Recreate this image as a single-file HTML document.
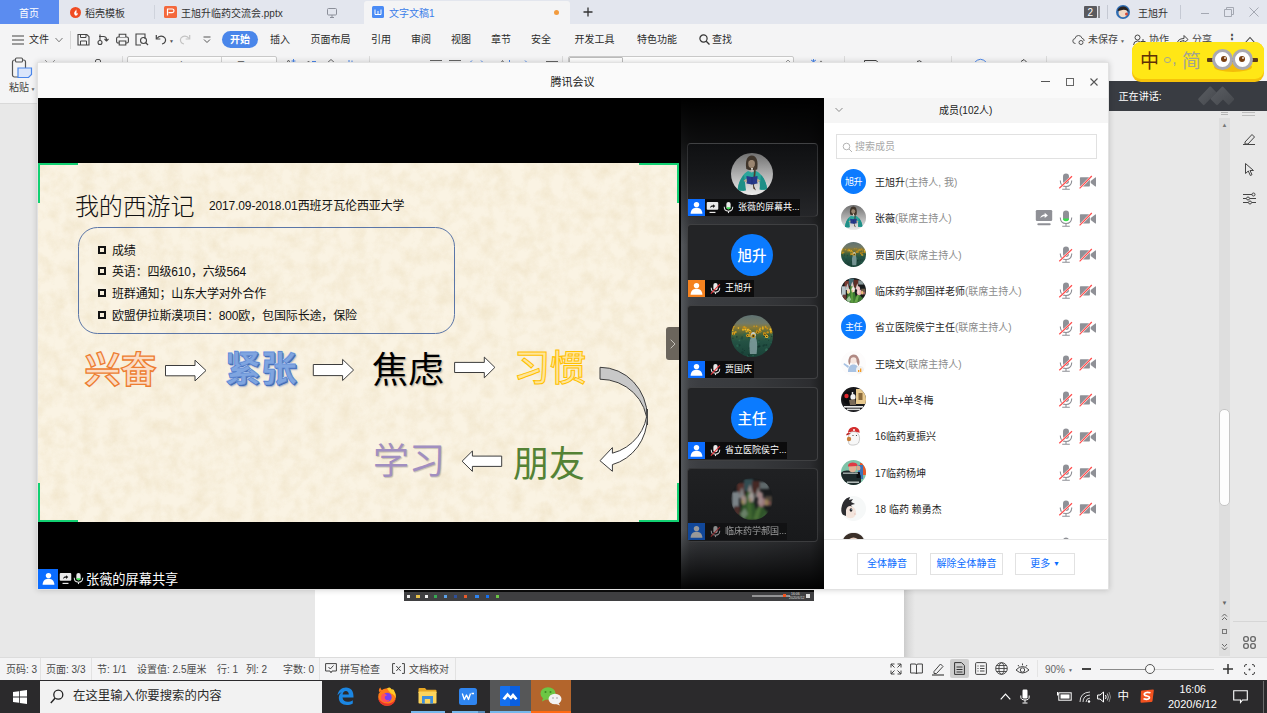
<!DOCTYPE html>
<html lang="zh-CN">
<head>
<meta charset="utf-8">
<title>腾讯会议</title>
<style>
*{box-sizing:border-box;margin:0;padding:0}
html,body{width:1267px;height:713px;overflow:hidden}
body{position:relative;background:#e8e8e8;font-family:"Liberation Sans","Noto Sans CJK SC",sans-serif;font-size:12px;color:#333;line-height:1}
.abs{position:absolute}
.t{position:absolute;white-space:nowrap;line-height:1}
/* ===== WPS chrome ===== */
#tabbar{left:0;top:0;width:1267px;height:24px;background:#e3e6ee}
#menubar{left:0;top:24px;width:1267px;height:30px;background:#f4f4f5}
#ribbon{left:0;top:54px;width:1267px;height:50px;background:#f4f4f5;border-bottom:1px solid #d9d9d9}
#docarea{left:0;top:104px;width:1267px;height:553px;background:#e8e8e8}
#page{left:315px;top:104px;width:589px;height:553px;background:#fff;}
#statusbar{left:0;top:657px;width:1267px;height:23px;background:#f4f4f5;border-top:1px solid #dcdcdc}
#taskbar{left:0;top:680px;width:1267px;height:33px;background:#2b2a2c}
/* ===== meeting window ===== */
#win{left:37px;top:62px;width:1072px;height:528px;background:#fafafa;border:1px solid #e2e2e2;box-shadow:0 0 6px rgba(0,0,0,.18)}
#stage{left:38px;top:98px;width:786px;height:491px;background:#000}
#slide{left:38px;top:163px;width:641px;height:359px;background:#f3ebda}
#strip{left:681px;top:98px;width:143px;height:491px;background:linear-gradient(180deg,#000 0%,rgba(0,0,0,.78) 9%,rgba(0,0,0,.4) 19%,rgba(0,0,0,0) 30%,rgba(0,0,0,0) 88%,rgba(0,0,0,.55) 95%,rgba(0,0,0,.95) 100%),linear-gradient(90deg,#54575b 0%,#4a4d51 3%,#404246 6%,#3b3d41 14%,#37393c 50%,#2c2d30 90%,#1c1d1e 100%)}
#members{left:824px;top:98px;width:284px;height:491px;background:#fff}

/* ===== slide ===== */
#slide{overflow:hidden}
#slide .t{color:#111;letter-spacing:-.140px}
.corner{position:absolute;background:#12d072}
.bul{position:absolute;left:60px;width:8px;height:8px;border:2px solid #111}
.wa{position:absolute;white-space:nowrap;line-height:1;font-size:36px;font-family:"Noto Sans CJK SC",sans-serif}

/* ===== strip ===== */
.tile{position:absolute;left:6px;width:131px;height:74px;background:#232426;border:1px solid rgba(255,255,255,.13);border-radius:4px}
.tile .av{position:absolute;left:43px;top:9px;width:42px;height:42px;border-radius:50%;overflow:hidden}
.tile .lab{position:absolute;left:0;top:54.500px;height:17px;background:#0c0c0d;color:#fff;font-size:9px;white-space:nowrap;padding-left:17px;line-height:17px;font-family:"Liberation Sans","Noto Sans CJK SC",sans-serif}
.tile .lab .u{position:absolute;left:0;top:0;width:17px;height:17px;background:#0a62ee}
.tile .lab svg{position:absolute}
.bluec{background:#0b7bff;color:#fff;text-align:center;font-family:"Noto Sans CJK SC",sans-serif}
/* ===== members ===== */
#members .hd{position:absolute;left:0;top:0;width:284px;height:25px;background:#f5f5f5}
#members .search{position:absolute;left:12px;top:36px;width:261px;height:25px;border:1px solid #e1e1e1;background:#fff}
.row{position:absolute;left:0;width:283px;height:36px}
.row .av{position:absolute;left:17px;top:5.500px;width:25px;height:25px;border-radius:50%;overflow:hidden}
.row .nm{position:absolute;left:51px;top:14.500px;font-size:10px;line-height:1;color:#1f1f1f;white-space:nowrap}
.row .nm i{font-style:normal;color:#8c8c8c}
.row svg.ic{position:absolute;top:9px}
.btn{position:absolute;top:455px;height:22px;border:1px solid #e2e2e2;background:#fff;color:#0a6cff;font-size:10px;line-height:20px;text-align:center;white-space:nowrap}

/* ===== chrome text ===== */
.m{position:absolute;white-space:nowrap;line-height:1;font-size:10px;color:#2b2b2b;top:35px}
.sb{position:absolute;white-space:nowrap;line-height:1;font-size:10px;color:#4a4a4a;top:665px}
.sep{position:absolute;width:1px;background:#d9d9d9}
.ico{position:absolute;overflow:visible}
</style>
</head>
<body>
<svg width="0" height="0" style="position:absolute">
<defs>
<linearGradient id="gGirl" x1="0" y1="0" x2="0" y2="1"><stop offset="0" stop-color="#707070"/><stop offset=".55" stop-color="#b5b5b5"/><stop offset="1" stop-color="#ececec"/></linearGradient>
<linearGradient id="gSun" x1="0" y1="0" x2="0" y2="1"><stop offset="0" stop-color="#5f7272"/><stop offset=".2" stop-color="#717a68"/><stop offset=".3" stop-color="#8a7a34"/><stop offset=".48" stop-color="#3f5f3c"/><stop offset=".62" stop-color="#245244"/><stop offset="1" stop-color="#1a4238"/></linearGradient>
<filter id="blur1" x="-5%" y="-5%" width="110%" height="110%"><feGaussianBlur stdDeviation="0.9"/></filter>
<radialGradient id="gTul" cx=".5" cy=".5" r=".6"><stop offset="0" stop-color="#3a4a30"/><stop offset="1" stop-color="#15181a"/></radialGradient>
<symbol id="avGirl" viewBox="0 0 42 42">
<rect width="42" height="42" fill="url(#gGirl)"/>
<path d="M15.300 16C14 8 16 2.500 20.800 2.500C25.600 2.500 27.400 8 26.200 16.500L23 17L18 17Z" fill="#3f352b"/>
<path d="M6.500 37.500C7.500 28 12 20.500 17 18L20.500 19.500L25 18C31 20.500 35.500 29 36.200 36.500L29.500 37L28.500 29L14 29L13.500 38Z" fill="#2ba59b"/>
<path d="M6.500 37.500C7.500 30 10 25 13 22L15 37.500Z" fill="#1e8f87"/><path d="M36.200 36.500C35.500 30 33 25 30 22L28.500 36.500Z" fill="#1e8f87"/>
<ellipse cx="20.600" cy="10.500" rx="3.300" ry="4.600" fill="#9b8671"/>
<path d="M17.300 9C17.800 6 19 5 20.600 5C22.300 5 23.500 6 24 9C23 7.500 22 7 20.600 7C19.200 7 18.200 7.500 17.300 9Z" fill="#3f352b"/>
<path d="M20 15L21 19.500L22 15Z" fill="#e8e2da"/>
<path d="M24.500 13C25.300 20 23.500 27 23 33L25 37.500L22.300 35.500C21.500 28 23.300 19 23.300 13Z" fill="#4b3c2f"/>
<path d="M15.500 23L21 24L26.500 23L26.500 30.500L21 31.500L15.500 30.500Z" fill="#26398a"/>
<path d="M21 24V31.500" stroke="#1b2a6a" stroke-width=".6"/>
<path d="M12.500 28L15.500 25.500L16 29.500Z" fill="#c9a98c"/><path d="M29.500 28L26.500 25.500L26 29.500Z" fill="#c9a98c"/>
</symbol>
<symbol id="avSun" viewBox="0 0 42 42">
<rect width="42" height="42" fill="url(#gSun)"/>
<circle cx="8.4" cy="30.3" r="1.08" fill="#163a32" opacity=".8"/><circle cx="33.2" cy="29.9" r="0.65" fill="#12302a" opacity=".8"/><circle cx="40.2" cy="29.3" r="1.25" fill="#1d4a3e" opacity=".8"/><circle cx="40.1" cy="27.4" r="0.68" fill="#2b6550" opacity=".8"/><circle cx="19.7" cy="26.8" r="0.89" fill="#12302a" opacity=".8"/><circle cx="35.3" cy="30.0" r="1.02" fill="#163a32" opacity=".8"/><circle cx="35.1" cy="21.8" r="0.81" fill="#2b6550" opacity=".8"/><circle cx="20.1" cy="23.1" r="1.13" fill="#1d4a3e" opacity=".8"/><circle cx="3.6" cy="40.8" r="1.08" fill="#35705a" opacity=".8"/><circle cx="16.9" cy="40.8" r="1.08" fill="#2b6550" opacity=".8"/><circle cx="41.7" cy="19.6" r="0.97" fill="#35705a" opacity=".8"/><circle cx="33.9" cy="22.4" r="1.16" fill="#35705a" opacity=".8"/><circle cx="27.6" cy="27.1" r="0.94" fill="#2b6550" opacity=".8"/><circle cx="0.9" cy="37.4" r="1.08" fill="#163a32" opacity=".8"/><circle cx="22.1" cy="40.5" r="0.85" fill="#2b6550" opacity=".8"/><circle cx="34.7" cy="23.9" r="0.70" fill="#1d4a3e" opacity=".8"/><circle cx="21.0" cy="36.6" r="0.76" fill="#12302a" opacity=".8"/><circle cx="17.6" cy="22.0" r="1.23" fill="#1d4a3e" opacity=".8"/><circle cx="37.7" cy="34.2" r="1.15" fill="#12302a" opacity=".8"/><circle cx="17.7" cy="40.1" r="0.90" fill="#12302a" opacity=".8"/><circle cx="6.4" cy="30.7" r="1.20" fill="#2b6550" opacity=".8"/><circle cx="25.6" cy="36.8" r="0.62" fill="#2b6550" opacity=".8"/><circle cx="19.9" cy="35.7" r="0.95" fill="#1d4a3e" opacity=".8"/><circle cx="28.7" cy="31.2" r="0.89" fill="#163a32" opacity=".8"/><circle cx="37.1" cy="20.3" r="0.65" fill="#163a32" opacity=".8"/><circle cx="32.4" cy="30.7" r="0.95" fill="#163a32" opacity=".8"/><circle cx="18.6" cy="33.1" r="0.90" fill="#12302a" opacity=".8"/><circle cx="8.4" cy="25.4" r="0.91" fill="#35705a" opacity=".8"/><circle cx="21.3" cy="24.7" r="0.92" fill="#1d4a3e" opacity=".8"/><circle cx="38.8" cy="39.5" r="0.66" fill="#35705a" opacity=".8"/><circle cx="5.8" cy="21.8" r="0.85" fill="#163a32" opacity=".8"/><circle cx="28.2" cy="28.9" r="0.67" fill="#1d4a3e" opacity=".8"/><circle cx="32.9" cy="39.6" r="0.62" fill="#1d4a3e" opacity=".8"/><circle cx="6.0" cy="39.3" r="1.27" fill="#2b6550" opacity=".8"/><circle cx="31.4" cy="21.2" r="1.21" fill="#2b6550" opacity=".8"/><circle cx="41.6" cy="38.1" r="0.63" fill="#35705a" opacity=".8"/><circle cx="41.8" cy="28.3" r="0.84" fill="#1d4a3e" opacity=".8"/><circle cx="13.4" cy="35.6" r="0.52" fill="#12302a" opacity=".8"/><circle cx="19.3" cy="35.2" r="0.81" fill="#12302a" opacity=".8"/><circle cx="26.2" cy="30.8" r="0.55" fill="#2b6550" opacity=".8"/><circle cx="40.8" cy="21.4" r="0.71" fill="#163a32" opacity=".8"/><circle cx="38.0" cy="23.2" r="1.10" fill="#35705a" opacity=".8"/><circle cx="35.7" cy="34.5" r="1.26" fill="#35705a" opacity=".8"/><circle cx="6.3" cy="40.1" r="0.96" fill="#1d4a3e" opacity=".8"/><circle cx="3.8" cy="20.3" r="1.05" fill="#35705a" opacity=".8"/><circle cx="37.6" cy="25.2" r="0.51" fill="#163a32" opacity=".8"/><circle cx="33.7" cy="20.9" r="1.18" fill="#163a32" opacity=".8"/><circle cx="11.1" cy="21.8" r="0.51" fill="#12302a" opacity=".8"/><circle cx="17.5" cy="40.1" r="1.00" fill="#163a32" opacity=".8"/><circle cx="22.1" cy="24.5" r="0.59" fill="#2b6550" opacity=".8"/><circle cx="11.0" cy="23.2" r="1.25" fill="#1d4a3e" opacity=".8"/><circle cx="22.3" cy="23.7" r="0.86" fill="#2b6550" opacity=".8"/><circle cx="11.4" cy="37.5" r="1.30" fill="#163a32" opacity=".8"/><circle cx="0.6" cy="35.9" r="0.94" fill="#2b6550" opacity=".8"/><circle cx="21.6" cy="24.7" r="0.86" fill="#35705a" opacity=".8"/><circle cx="27.6" cy="31.6" r="1.21" fill="#12302a" opacity=".8"/><circle cx="12.9" cy="23.9" r="0.68" fill="#2b6550" opacity=".8"/><circle cx="35.0" cy="35.3" r="1.01" fill="#35705a" opacity=".8"/><circle cx="41.6" cy="41.6" r="1.17" fill="#163a32" opacity=".8"/><circle cx="3.0" cy="36.0" r="0.70" fill="#2b6550" opacity=".8"/><circle cx="2.3" cy="34.3" r="0.80" fill="#12302a" opacity=".8"/><circle cx="28.2" cy="25.5" r="0.69" fill="#1d4a3e" opacity=".8"/><circle cx="1.9" cy="23.3" r="0.72" fill="#163a32" opacity=".8"/><circle cx="11.1" cy="41.1" r="1.28" fill="#12302a" opacity=".8"/><circle cx="13.6" cy="19.8" r="1.21" fill="#2b6550" opacity=".8"/><circle cx="15.0" cy="19.0" r="0.81" fill="#35705a" opacity=".8"/><circle cx="11.7" cy="34.1" r="0.70" fill="#163a32" opacity=".8"/><circle cx="3.8" cy="37.8" r="0.62" fill="#12302a" opacity=".8"/><circle cx="1.8" cy="19.5" r="0.74" fill="#2b6550" opacity=".8"/><circle cx="3.5" cy="41.0" r="1.18" fill="#2b6550" opacity=".8"/>
<circle cx="13.6" cy="12.2" r="0.91" fill="#e0a91e"/><circle cx="34.5" cy="11.5" r="0.83" fill="#d39a1a"/><circle cx="1.6" cy="15.3" r="0.96" fill="#e0a91e"/><circle cx="23.1" cy="11.2" r="0.79" fill="#d39a1a"/><circle cx="26.5" cy="16.9" r="1.11" fill="#edb92a"/><circle cx="2.1" cy="12.9" r="0.94" fill="#d39a1a"/><circle cx="12.2" cy="12.1" r="0.69" fill="#c98f17"/><circle cx="23.5" cy="18.0" r="1.22" fill="#d39a1a"/><circle cx="23.5" cy="18.0" r="0.51" fill="#3d2d10"/><circle cx="15.6" cy="16.5" r="1.07" fill="#e0a91e"/><circle cx="26.0" cy="16.0" r="1.21" fill="#c98f17"/><circle cx="26.0" cy="16.0" r="0.51" fill="#3d2d10"/><circle cx="19.6" cy="20.7" r="1.57" fill="#d39a1a"/><circle cx="19.6" cy="20.7" r="0.66" fill="#3d2d10"/><circle cx="33.4" cy="18.2" r="1.30" fill="#c98f17"/><circle cx="33.4" cy="18.2" r="0.54" fill="#3d2d10"/><circle cx="22.1" cy="20.1" r="1.67" fill="#c98f17"/><circle cx="22.1" cy="20.1" r="0.70" fill="#3d2d10"/><circle cx="25.6" cy="11.3" r="0.78" fill="#d39a1a"/><circle cx="31.8" cy="12.2" r="0.85" fill="#e0a91e"/><circle cx="40.4" cy="11.4" r="0.80" fill="#c98f17"/><circle cx="14.3" cy="14.4" r="1.05" fill="#edb92a"/><circle cx="2.9" cy="11.5" r="0.70" fill="#e0a91e"/><circle cx="2.5" cy="18.2" r="1.46" fill="#edb92a"/><circle cx="2.5" cy="18.2" r="0.61" fill="#3d2d10"/><circle cx="12.0" cy="14.7" r="1.15" fill="#e0a91e"/><circle cx="39.5" cy="14.4" r="1.10" fill="#edb92a"/><circle cx="2.5" cy="19.0" r="1.32" fill="#d39a1a"/><circle cx="2.5" cy="19.0" r="0.55" fill="#3d2d10"/><circle cx="16.7" cy="20.6" r="1.62" fill="#d39a1a"/><circle cx="16.7" cy="20.6" r="0.68" fill="#3d2d10"/><circle cx="18.9" cy="16.5" r="1.40" fill="#edb92a"/><circle cx="18.9" cy="16.5" r="0.59" fill="#3d2d10"/><circle cx="36.3" cy="13.6" r="0.94" fill="#c98f17"/><circle cx="28.7" cy="14.7" r="0.97" fill="#e0a91e"/><circle cx="7.4" cy="13.1" r="0.83" fill="#edb92a"/><circle cx="34.9" cy="12.5" r="0.80" fill="#d39a1a"/><circle cx="17.6" cy="14.6" r="1.10" fill="#d39a1a"/><circle cx="29.0" cy="16.2" r="1.26" fill="#e0a91e"/><circle cx="29.0" cy="16.2" r="0.53" fill="#3d2d10"/><circle cx="19.2" cy="20.1" r="1.75" fill="#edb92a"/><circle cx="19.2" cy="20.1" r="0.74" fill="#3d2d10"/><circle cx="16.7" cy="14.8" r="1.09" fill="#edb92a"/><circle cx="2.6" cy="11.2" r="0.65" fill="#d39a1a"/><circle cx="4.6" cy="17.1" r="1.14" fill="#d39a1a"/><circle cx="22.5" cy="20.9" r="1.69" fill="#e0a91e"/><circle cx="22.5" cy="20.9" r="0.71" fill="#3d2d10"/><circle cx="36.7" cy="17.3" r="1.17" fill="#c98f17"/><circle cx="40.1" cy="17.1" r="1.29" fill="#e0a91e"/><circle cx="40.1" cy="17.1" r="0.54" fill="#3d2d10"/><circle cx="35.7" cy="21.4" r="1.68" fill="#edb92a"/><circle cx="35.7" cy="21.4" r="0.71" fill="#3d2d10"/><circle cx="13.1" cy="12.1" r="0.94" fill="#c98f17"/><circle cx="20.1" cy="18.1" r="1.40" fill="#d39a1a"/><circle cx="20.1" cy="18.1" r="0.59" fill="#3d2d10"/><circle cx="39.9" cy="16.3" r="1.09" fill="#e0a91e"/><circle cx="31.8" cy="13.8" r="1.06" fill="#e0a91e"/><circle cx="29.2" cy="13.4" r="0.91" fill="#d39a1a"/><circle cx="14.9" cy="13.0" r="0.94" fill="#c98f17"/><circle cx="26.7" cy="17.2" r="1.43" fill="#d39a1a"/><circle cx="26.7" cy="17.2" r="0.60" fill="#3d2d10"/><circle cx="33.9" cy="19.5" r="1.61" fill="#d39a1a"/><circle cx="33.9" cy="19.5" r="0.68" fill="#3d2d10"/>
<path d="M19 39C18 31 18.300 26 19.600 23.500C19 20.500 20.500 18 22.300 18C24.100 18 25.600 20.500 25 23.500C26.300 26 26.600 31 25.600 39Z" fill="#8aa5a8" opacity=".8"/>
<path d="M19.600 21C19.600 18.500 20.800 17 22.300 17C23.800 17 25 18.500 25 21Z" fill="#c9d3d3" opacity=".9"/>
<circle cx="22.300" cy="21" r="2.100" fill="#c2931c"/><circle cx="22.300" cy="21" r="1" fill="#3a2c12"/>
</symbol>
<symbol id="avTul" viewBox="0 0 42 42">
<rect width="42" height="42" fill="#171a1c"/>
<g filter="url(#blur1)">
<rect x="6" y="5" width="8" height="13" fill="#7a3a32"/><rect x="13" y="1" width="9" height="12" fill="#3f6a72"/><rect x="21" y="3" width="8" height="13" fill="#5e2f28"/><rect x="29" y="4" width="9" height="7" fill="#8a9a9c"/>
<path d="M15 18L19 6L23 18Z" fill="#d8c8c4"/><path d="M24 19L27.500 9L30 19Z" fill="#cfc9c2"/><path d="M7 20L11 9L14 20Z" fill="#bfc4c4"/>
<rect x="1" y="14" width="7" height="16" fill="#b9c6cc"/><rect x="3" y="28" width="6" height="9" fill="#6a3a34"/>
<rect x="34" y="18" width="7" height="10" fill="#6a5a48"/><circle cx="38" cy="25" r="2" fill="#b86a6a"/>
<path d="M8 42L12 22L17 12L19 30L22 20L25 32L30 26L36 34L32 42Z" fill="#3d7a30"/>
<path d="M16 42L17 14L19.500 14L21 42Z" fill="#5a9a3e"/><path d="M22 42L27 28L30 30L27 42Z" fill="#69a848"/>
<path d="M9 36L14 30L17 36L13 41Z" fill="#9fc49a"/><path d="M30 40L37 32L35 40Z" fill="#4f8a44"/>
<ellipse cx="12.500" cy="22" rx="2.800" ry="4.300" fill="#f1cfc4"/><ellipse cx="11.500" cy="24" rx="1.500" ry="2.500" fill="#e6d27a"/>
<ellipse cx="20.500" cy="19.500" rx="3" ry="4.500" fill="#f6ece4"/><ellipse cx="19.500" cy="22" rx="1.300" ry="2.300" fill="#f0c9a0"/>
<ellipse cx="29" cy="17.500" rx="3" ry="3.800" fill="#f3c6c6"/>
<ellipse cx="30.500" cy="24" rx="4" ry="5" fill="#eeb3b6"/><ellipse cx="29.500" cy="23" rx="1.800" ry="3.500" fill="#f7d6d6"/>
<ellipse cx="35.500" cy="24.500" rx="1.800" ry="3.200" fill="#e9c07a"/>
</g>
</symbol>
<symbol id="avWxw" viewBox="0 0 25 25">
<rect width="25" height="25" fill="#fdfcfc"/>
<path d="M8 7C9 3 15 2 17 6C19 9 19 13 17.500 15L15 10L10 10L8.500 14C7 12 7 9 8 7Z" fill="#b08a84"/>
<ellipse cx="12.500" cy="9.500" rx="3" ry="3.300" fill="#f6e6df"/>
<path d="M7 21C7 16 9 13.500 12.500 13.500C16 13.500 18 16 18 21Z" fill="#a9c3e3"/>
<path d="M8 15L3 12L2.500 13.500L7 17Z" fill="#a9c3e3"/>
<circle cx="19" cy="19" r="4" fill="#f1f1f1"/><rect x="17" y="19" width="1.300" height="2" fill="#f59a23"/><rect x="19" y="17.500" width="1.300" height="3.500" fill="#f59a23"/>
</symbol>
<symbol id="avSd" viewBox="0 0 25 25">
<rect width="25" height="25" fill="#17171a"/>
<rect x="15" y="2" width="10" height="15" fill="#e8c98e"/><rect x="17.500" y="6" width="4" height="7" fill="#8a6a3c"/>
<circle cx="8" cy="11" r="6.500" fill="#0c0c0e"/><circle cx="5.500" cy="9" r="2.200" fill="#e0262d"/>
<ellipse cx="12" cy="10" rx="2.600" ry="3" fill="#f2f2f2"/><circle cx="11.500" cy="6" r=".9" fill="#fff"/>
<path d="M8 13L14 12L15 18L9 18Z" fill="#7a6a58"/>
<rect x="3" y="19" width="19" height="1.700" fill="#e6e6e6"/><rect x="6" y="21.600" width="13" height="1.500" fill="#d8d8d8"/>
</symbol>
<symbol id="avDuck" viewBox="0 0 25 25">
<rect width="25" height="25" fill="#fff"/>
<path d="M8 21C6.500 17 7 12 9 10C11 8 15 8 17 10.500C19 13 19 17 17.500 20C16 22 10 23 8 21Z" fill="#f7f7f7" stroke="#9a9a9a" stroke-width=".5"/>
<path d="M7 10C7 6 10 4 13 4C16.500 4 19 6.500 18.500 10C15 8 10 8 7 10Z" fill="#d32f2f"/>
<path d="M7 10C5.500 10.500 5 11.500 5.500 12.500L10 10.500Z" fill="#b71c1c"/>
<circle cx="13" cy="7" r="1" fill="#fff"/>
<circle cx="8" cy="16" r="2.200" fill="#c9803a"/>
<circle cx="12" cy="12.500" r=".6" fill="#333"/><circle cx="15.500" cy="12.500" r=".6" fill="#333"/>
</symbol>
<symbol id="avMan" viewBox="0 0 25 25">
<rect width="25" height="25" fill="#7fc2a8"/>
<rect x="19" y="3" width="6" height="12" fill="#e9582a"/>
<rect x="17" y="5" width="5" height="14" fill="#3d73b8"/>
<path d="M0 25L0 13C3 10 7 10 12 12C16 12 19 13 20 16L20 25Z" fill="#1e2a2b"/>
<ellipse cx="11.500" cy="8" rx="3.700" ry="4.200" fill="#e3b295"/>
<path d="M7 5.500C7.500 2 15 1.500 16.500 5L16.500 6L7 6.500Z" fill="#e03a44"/>
<ellipse cx="17.500" cy="8" rx="2" ry="2.500" fill="#d8a98e"/>
<rect x="15.500" y="12" width="3.500" height="6" rx=".8" fill="#0d0d0f"/>
<rect x="2" y="12.600" width="15" height="1.200" fill="#dfe6e4" opacity=".8"/><rect x="6" y="21.500" width="12" height="1.400" fill="#dfe6e4" opacity=".85"/>
</symbol>
<symbol id="avAni" viewBox="0 0 25 25">
<rect width="25" height="25" fill="#f6f8f8"/>
<path d="M0 18C0 8 3 2 9 1L8 4L12 3L10 6L14 8L10 9L12 12L8 11L9 15L5 14L5 20Z" fill="#2c2c30"/>
<path d="M5 14C6 10 9 9 12 11C15 13 16 17 14 20C12 23 7 23 5 20Z" fill="#f3e4dc"/>
<ellipse cx="10" cy="14" rx="1.400" ry="1.800" fill="#2a2a2e"/><circle cx="10.300" cy="13.600" r=".5" fill="#8fb9d9"/>
<path d="M13 17L15.500 18L13.500 19Z" fill="#e8c9c0"/>
</symbol>
<symbol id="avLast" viewBox="0 0 25 25">
<rect width="25" height="25" fill="#efefef"/>
<path d="M1 14C1 5 6 1 12.500 1C19 1 24 5 24 14L20 9L5 9Z" fill="#3a2f28"/>
<ellipse cx="12.500" cy="13" rx="7" ry="7.500" fill="#e9d0c0"/>
</symbol>
<!-- list icons -->
<symbol id="icMicOff" viewBox="0 0 16 18">
<rect x="5" y="1.500" width="6" height="10.500" rx="3" fill="#8f9096"/>
<path d="M2.300 8.500C2.300 12.500 4.500 14.500 8 14.500C11.500 14.500 13.700 12.500 13.700 8.500" fill="none" stroke="#8f9096" stroke-width="1.100"/>
<path d="M8 14.500V17M4.200 17.200H11.800" stroke="#8f9096" stroke-width="1.100" fill="none"/>
<path d="M1.300 16.300L14 4.200" stroke="#fff" stroke-width="2.200"/><path d="M1.300 16.300L14 4.200" stroke="#ff4b4b" stroke-width="1.200"/>
</symbol>
<symbol id="icMicOn" viewBox="0 0 16 18">
<rect x="5" y="1.500" width="6" height="10.500" rx="3" fill="#8f9096"/>
<path d="M5 9.500H11V9.800A3 2.400 0 0 1 5 9.800Z" fill="#35e04a"/>
<path d="M2.300 8.500C2.300 12.500 4.500 14.500 8 14.500C11.500 14.500 13.700 12.500 13.700 8.500" fill="none" stroke="#8f9096" stroke-width="1.100"/>
<path d="M8 14.500V17M4.200 17.200H11.800" stroke="#8f9096" stroke-width="1.100" fill="none"/>
</symbol>
<symbol id="icCamOff" viewBox="0 0 20 18">
<rect x="1.900" y="5.300" width="10" height="9.300" rx=".8" fill="#8f9096"/>
<path d="M12.700 9L17.300 5.500Q18 5 18 5.900V14Q18 14.900 17.300 14.400L12.700 11Z" fill="#8f9096"/>
<path d="M1.600 16.400L13.800 4" stroke="#fff" stroke-width="2.200"/><path d="M1.600 16.400L13.800 4" stroke="#ff4b4b" stroke-width="1.200"/>
</symbol>
<symbol id="icShare" viewBox="0 0 18 18">
<rect x=".8" y="1" width="16.400" height="11" rx="1.300" fill="#8f9096"/>
<path d="M3.300 15.300H14.700" stroke="#8f9096" stroke-width="2" stroke-linecap="round"/>
<path d="M5.300 9.300C5.800 6.500 7.500 5.400 9.700 5.400V3.700L12.900 6.400L9.700 9.100V7.300C8 7.300 6.600 7.800 5.300 9.300Z" fill="#fff"/>
</symbol>
<!-- strip label icons -->
<symbol id="icUser" viewBox="0 0 17 17">
<circle cx="8.500" cy="5.600" r="2.700" fill="#fff"/><path d="M2.600 14.800C2.800 10.800 5 8.800 8.500 8.800C12 8.800 14.200 10.800 14.400 14.800Z" fill="#fff"/>
</symbol>
<symbol id="icMicW" viewBox="0 0 14 14">
<rect x="4.700" y="1" width="4.600" height="8" rx="2.300" fill="#e9e9e9"/>
<path d="M2.400 6.300C2.400 9.500 4.200 11 7 11C9.800 11 11.600 9.500 11.600 6.300" fill="none" stroke="#e9e9e9" stroke-width="1.100"/>
<path d="M7 11V13" stroke="#e9e9e9" stroke-width="1.200"/>
<path d="M2 12.500L11.800 2.300" stroke="#e8343a" stroke-width="1.100"/>
</symbol>
<symbol id="icMicG" viewBox="0 0 14 14">
<rect x="4.700" y="1" width="4.600" height="8" rx="2.300" fill="#e9e9e9"/>
<path d="M4.700 6.800H9.300A2.300 2.300 0 0 1 4.700 6.800Z" fill="#39d94c"/>
<path d="M2.400 6.300C2.400 9.500 4.200 11 7 11C9.800 11 11.600 9.500 11.600 6.300" fill="none" stroke="#e9e9e9" stroke-width="1.100"/>
<path d="M7 11V13" stroke="#e9e9e9" stroke-width="1.200"/>
</symbol>
<symbol id="icShareW" viewBox="0 0 14 14">
<rect x=".8" y="1.200" width="12.400" height="8.200" rx="1" fill="#e9e9e9"/>
<path d="M3.800 12.300H10.200" stroke="#e9e9e9" stroke-width="1.300"/>
<path d="M4.300 7.600C4.700 5.500 6 4.700 7.600 4.700V3.400L10 5.500L7.600 7.500V6.200C6.300 6.200 5.300 6.500 4.300 7.600Z" fill="#1a1a1a"/>
</symbol>
</defs>
</svg>
<!-- WPS background app -->
<div id="tabbar" class="abs"></div>
<div id="menubar" class="abs"></div>
<div id="ribbon" class="abs"></div>
<div id="docarea" class="abs"></div>
<div id="page" class="abs"></div>
<div class="abs" style="left:904px;top:104px;width:11px;height:553px;background:linear-gradient(90deg,#cbcbcb,#dadada 40%,#e8e8e8)"></div>
<div id="statusbar" class="abs"></div>
<div id="taskbar" class="abs"></div>

<!-- tab bar content -->
<div class="abs" style="left:0;top:0;width:59px;height:24px;background:#5b8cf0"></div>
<div class="t" style="left:19px;top:8.500px;font-size:10px;color:#fff">首页</div>
<svg class="ico" style="left:70px;top:7px" width="11" height="11" viewBox="0 0 11 11"><circle cx="5.500" cy="5.500" r="5.500" fill="#f04b22"/><path d="M5.800 1.800C6.800 3.500 4 4.500 4.200 6.600C4.300 8 5.300 8.800 6.300 8.600C7.600 8.300 8 7 7.500 5.800C7.200 6.500 6.700 6.700 6.300 6.500C6.800 4.800 6.600 3 5.800 1.800Z" fill="#fff"/></svg>
<div class="t" style="left:85px;top:8.500px;font-size:10px;color:#333">稻壳模板</div>
<div class="sep" style="left:154px;top:5px;height:14px;background:#cfd3dc"></div>
<svg class="ico" style="left:164px;top:6px" width="13" height="12" viewBox="0 0 13 12"><rect width="13" height="12" rx="1.500" fill="#f4683c"/><path d="M3.500 9.500V3H8.200Q10 3 10 4.800Q10 6.600 8.200 6.600H4.500" fill="none" stroke="#fff" stroke-width="1.200"/></svg>
<div class="t" style="left:181px;top:8.500px;font-size:10px;color:#333">王旭升临药交流会.pptx</div>
<svg class="ico" style="left:327px;top:8px" width="10" height="10" viewBox="0 0 10 10"><rect x=".5" y=".5" width="9" height="6.500" rx="1" fill="none" stroke="#8b8f99" stroke-width="1"/><path d="M5 7V9M3 9.500H7" stroke="#8b8f99" stroke-width="1"/></svg>
<div class="abs" style="left:364px;top:1px;width:206px;height:23px;background:#f4f4f5;border-radius:3px 3px 0 0"></div>
<svg class="ico" style="left:372px;top:6px" width="12" height="12" viewBox="0 0 12 12"><rect width="12" height="12" rx="1.500" fill="#4a8bf5"/><path d="M3 3.500V8.500H9V3.500M6 5V8.500" fill="none" stroke="#fff" stroke-width="1"/></svg>
<div class="t" style="left:389px;top:8.500px;font-size:10px;color:#3b7de9">文字文稿1</div>
<div class="abs" style="left:554px;top:10px;width:5px;height:5px;border-radius:50%;background:#f29b3e"></div>
<svg class="ico" style="left:583px;top:7px" width="10" height="10" viewBox="0 0 10 10"><path d="M5 .5V9.500M.5 5H9.500" stroke="#333" stroke-width="1.300"/></svg>
<div class="abs" style="left:1084px;top:6px;width:13px;height:12px;background:#5a5a5e;border-radius:1px"></div>
<div class="t" style="left:1087.500px;top:7.500px;font-size:10px;color:#fff">2</div>
<div class="abs" style="left:1098px;top:6px;width:2px;height:12px;background:#8a8a8e"></div>
<div class="sep" style="left:1107px;top:5px;height:14px;background:#c5c9d3"></div>
<svg class="ico" style="left:1116px;top:5px" width="14" height="14" viewBox="0 0 14 14"><circle cx="7" cy="7" r="7" fill="#2f6db3"/><ellipse cx="7" cy="8" rx="4.500" ry="4.200" fill="#f3d9c4"/><path d="M1.500 6C2 2.500 5 1 8 1.500C11 2 12.800 4.500 12.500 7C11 5 8 4 4.500 5.500Z" fill="#2a2320"/><circle cx="10.500" cy="9" r="1.500" fill="#d74a3a"/></svg>
<div class="t" style="left:1138px;top:8.500px;font-size:10px;color:#333">王旭升</div>
<div class="sep" style="left:1180px;top:5px;height:14px;background:#c5c9d3"></div>
<div class="abs" style="left:1201px;top:13px;width:8px;height:1px;background:#a4a8b2"></div>
<svg class="ico" style="left:1224px;top:7px" width="10" height="10" viewBox="0 0 10 10"><path d="M.5 2.500H7.500V9.500H.5Z M2.500 2.500V.5H9.500V7.500H7.500" fill="none" stroke="#a4a8b2" stroke-width="1"/></svg>
<svg class="ico" style="left:1249px;top:7px" width="10" height="10" viewBox="0 0 10 10"><path d="M.5 .5L9.500 9.500M9.500 .5L.5 9.500" stroke="#a4a8b2" stroke-width="1"/></svg>
<!-- menu bar content -->
<svg class="ico" style="left:12px;top:35px" width="12" height="10" viewBox="0 0 12 10"><path d="M0 1H12M0 5H12M0 9H12" stroke="#444" stroke-width="1.100"/></svg>
<div class="m" style="left:29px">文件</div>
<svg class="ico" style="left:55px;top:37px" width="8" height="6" viewBox="0 0 8 6"><path d="M.5 1L4 4.800L7.500 1" fill="none" stroke="#777" stroke-width="1"/></svg>
<div class="sep" style="left:70px;top:31px;height:18px"></div>
<svg class="ico" style="left:77px;top:33px" width="13" height="13" viewBox="0 0 13 13"><path d="M1 1.500H9.800L12 3.700V12H1Z" fill="none" stroke="#444" stroke-width="1.100"/><path d="M3.500 1.500V4.500H9V1.500M3.500 12V8H9.500V12" fill="none" stroke="#444" stroke-width="1"/></svg>
<svg class="ico" style="left:97px;top:33px" width="13" height="13" viewBox="0 0 13 13"><path d="M2 3.500H6.500Q9.500 3.500 9.500 6.500V8M9.500 8L7.500 6M9.500 8L11.500 6" fill="none" stroke="#444" stroke-width="1.100"/><circle cx="3" cy="9.500" r="2" fill="none" stroke="#444" stroke-width="1.100"/><path d="M3 1.500V7.500" stroke="#444" stroke-width="1.100"/></svg>
<svg class="ico" style="left:116px;top:33px" width="13" height="13" viewBox="0 0 13 13"><rect x=".6" y="4" width="11.800" height="6" rx="1.500" fill="none" stroke="#444" stroke-width="1.100"/><path d="M3.200 4V1.300H9.800V4M3.200 8H9.800V12H3.200Z" fill="#f4f4f5" stroke="#444" stroke-width="1.100"/></svg>
<svg class="ico" style="left:135px;top:33px" width="14" height="13" viewBox="0 0 14 13"><path d="M10 6V1H1V12H6" fill="none" stroke="#444" stroke-width="1.100"/><circle cx="8.500" cy="7.500" r="3" fill="none" stroke="#444" stroke-width="1.100"/><path d="M10.700 9.700L13 12" stroke="#444" stroke-width="1.200"/></svg>
<svg class="ico" style="left:155px;top:34px" width="12" height="11" viewBox="0 0 12 11"><path d="M2 4.500C4 1.500 8 1.500 10 4C11.500 6.500 10 9.500 7 10" fill="none" stroke="#444" stroke-width="1.200"/><path d="M1.300 1V5H5.300" fill="none" stroke="#444" stroke-width="1.200"/></svg>
<div class="t" style="left:169px;top:39px;font-size:5px;color:#555">▼</div>
<svg class="ico" style="left:179px;top:34px" width="12" height="11" viewBox="0 0 12 11"><path d="M10 4.500C8 1.500 4 1.500 2 4C.5 6.500 2 9.500 5 10" fill="none" stroke="#c3c3c3" stroke-width="1.200"/><path d="M10.700 1V5H6.700" fill="none" stroke="#c3c3c3" stroke-width="1.200"/></svg>
<svg class="ico" style="left:203px;top:36px" width="8" height="8" viewBox="0 0 8 8"><path d="M.5 1H7.500M1 3.500L4 6.500L7 3.500" fill="none" stroke="#555" stroke-width="1"/></svg>
<div class="abs" style="left:222px;top:31px;width:36px;height:17px;border-radius:9px;background:#4a86ea"></div>
<div class="m" style="left:230px;color:#fff;font-weight:700">开始</div>
<div class="m" style="left:270px">插入</div>
<div class="m" style="left:310.500px">页面布局</div>
<div class="m" style="left:371px">引用</div>
<div class="m" style="left:411px">审阅</div>
<div class="m" style="left:451px">视图</div>
<div class="m" style="left:491px">章节</div>
<div class="m" style="left:531px">安全</div>
<div class="m" style="left:574.500px">开发工具</div>
<div class="m" style="left:637px">特色功能</div>
<svg class="ico" style="left:699px;top:34px" width="11" height="11" viewBox="0 0 11 11"><circle cx="4.500" cy="4.500" r="3.600" fill="none" stroke="#333" stroke-width="1.200"/><path d="M7.200 7.200L10.500 10.500" stroke="#333" stroke-width="1.300"/></svg>
<div class="m" style="left:712px">查找</div>
<svg class="ico" style="left:1072px;top:34px" width="13" height="11" viewBox="0 0 13 11"><path d="M3.500 9.500Q.8 9.500 .8 7Q.8 4.800 3 4.600Q3.500 1.500 6.500 1.500Q9.300 1.500 10 4.300Q12.200 4.600 12.200 7" fill="none" stroke="#555" stroke-width="1"/><circle cx="9" cy="8.500" r="2" fill="none" stroke="#555" stroke-width="1"/></svg>
<div class="m" style="left:1088px;color:#444">未保存</div>
<div class="t" style="left:1120px;top:39px;font-size:5px;color:#666">▼</div>
<svg class="ico" style="left:1133px;top:34px" width="13" height="12" viewBox="0 0 13 12"><circle cx="4.500" cy="3.500" r="2.500" fill="none" stroke="#444" stroke-width="1"/><path d="M.6 11Q.6 7 4.500 7Q7 7 8 9" fill="none" stroke="#444" stroke-width="1"/><path d="M10 5V10M7.500 7.500H12.500" stroke="#444" stroke-width="1"/></svg>
<div class="m" style="left:1149px;color:#444">协作</div>
<svg class="ico" style="left:1176px;top:34px" width="13" height="12" viewBox="0 0 13 12"><path d="M1 11Q1 4.500 8 4.500V1.500L12 5.500L8 9V6.500Q3.500 6.500 1 11Z" fill="none" stroke="#444" stroke-width="1"/></svg>
<div class="m" style="left:1192px;color:#444">分享</div>
<div class="t" style="left:1226px;top:33px;font-size:12px;color:#444;font-weight:700">⋮</div>
<svg class="ico" style="left:1244px;top:36px" width="12" height="8" viewBox="0 0 12 8"><path d="M1 7L6 1.500L11 7" fill="none" stroke="#444" stroke-width="1.100"/></svg>
<!-- ribbon fragments -->
<svg class="ico" style="left:10px;top:57px" width="24" height="24" viewBox="0 0 24 24"><rect x="2.500" y="3" width="13" height="17" rx="2" fill="#f4f4f5" stroke="#555" stroke-width="1.200"/><rect x="5.500" y="1" width="7" height="4" rx="1" fill="#f4f4f5" stroke="#555" stroke-width="1.100"/><path d="M8 11H21.500V17.500L18.500 20.500H8Z" fill="#dbe6fb" stroke="#4a86ea" stroke-width="1.200"/></svg>
<div class="t" style="left:9px;top:82.500px;font-size:10px;color:#444">粘贴</div>
<div class="t" style="left:30.500px;top:86.500px;font-size:5px;color:#666">▼</div>
<div class="abs" style="left:127px;top:56px;width:150px;height:14px;background:#fff;border:1px solid #c9c9c9;border-radius:2px"></div>
<div class="sep" style="left:221px;top:57px;height:12px;background:#d4d4d4"></div>
<div class="t" style="left:132px;top:61.500px;font-size:10px;color:#555">Calibri (正文)</div>
<div class="t" style="left:226px;top:61.500px;font-size:10px;color:#555">五号</div>
<div class="abs" style="left:568px;top:56px;width:226px;height:14px;background:#fff;border:1px solid #c9c9c9;border-radius:2px"></div>
<div class="abs" style="left:569px;top:57px;width:54px;height:13px;border:1px solid #bdbdbd;border-radius:1px"></div>
<div class="t" style="left:626px;top:60.500px;font-size:13px;color:#222;font-weight:700;letter-spacing:1.500px">AaBbCcDd</div>
<svg class="ico" style="left:0;top:54px;overflow:hidden" width="1267" height="9" viewBox="0 54 1267 9">
<g stroke="#dcdcdc" stroke-width="1"><path d="M122.500 56V63M369.500 56V63M562.500 56V63M844.500 56V63M951.500 56V63M1046.500 56V63"/></g>
<g fill="none" stroke="#9a9a9a" stroke-width="1">
<path d="M45 60L50 65M55 60L50 65"/><path d="M60 62.500H61.500M64 62.500H65.500M68 62.500H69.500"/>
<rect x="95.500" y="59.500" width="5" height="6" rx="1.500" stroke="#555"/>
</g>
<g fill="none" stroke="#666" stroke-width="1">
<path d="M285 66L288.500 60L292 66"/><path d="M305 66L308.500 61L312 66"/><path d="M326 64L331 59.500L336 64"/>
<path d="M377 62.500H378.500M381 62.500H389M402 62.500H403.500M406 62.500H414"/>
<path d="M430 60.500H442M449 60.500H461"/>
<path d="M499 66L502.500 60.500L506 66"/>
<rect x="546.500" y="61.500" width="11" height="6"/>
<path d="M864.500 66V60.500H876L879.500 63.500V66" stroke="#444"/>
<path d="M917 61.500Q920 59.500 922 62.500" stroke="#444"/>
<path d="M1021 61.500L1024 59.500L1027 62.500" stroke="#444"/>
</g>
<g fill="none" stroke="#4a86ea" stroke-width="1">
<path d="M293.500 59V63M291.500 61H295.500"/><path d="M312 61.500H316"/>
<path d="M345 62.500H355M349 60V63M352 60.500V63"/>
<path d="M470 62.500H483M472 60.500L470 62.500M481 60.500L483 62.500"/>
<path d="M509.500 60V63"/><path d="M520 62.500H527M525 60.500L527 62.500M529 62.500H533"/>
<path d="M813.500 59V63M811 60L816 63M816 60L811 63"/>
<path d="M974 63Q980.500 55.500 987 63"/>
</g>
<path d="M819 63L821 60.500L823 63Z" fill="#666"/>
<path d="M786 62L788 60L790 62" fill="none" stroke="#999" stroke-width="1"/>
</svg>
<!-- right side of WPS -->
<div class="abs" style="left:1219px;top:118px;width:11px;height:538px;background:#dedede"></div>
<div class="abs" style="left:1221px;top:112px;width:7px;height:1px;background:#b5b5b5"></div><div class="abs" style="left:1221px;top:114px;width:7px;height:1px;background:#b5b5b5"></div>
<div class="abs" style="left:1219px;top:409px;width:11px;height:97px;background:#fdfdfd;border:1px solid #c6c6c6;border-radius:5px"></div>
<div class="t" style="left:1221.500px;top:122px;font-size:6px;color:#777">▲</div>
<div class="t" style="left:1221.500px;top:600px;font-size:6px;color:#666">▼</div>
<svg class="ico" style="left:1221px;top:613px" width="7" height="8" viewBox="0 0 7 8"><path d="M1 3.500L3.500 1L6 3.500M1 7L3.500 4.500L6 7" fill="none" stroke="#666" stroke-width="1"/></svg>
<div class="abs" style="left:1222px;top:629px;width:5px;height:5px;border:1px solid #777"></div>
<svg class="ico" style="left:1221px;top:643px" width="7" height="8" viewBox="0 0 7 8"><path d="M1 1L3.500 3.500L6 1M1 4.500L3.500 7L6 4.500" fill="none" stroke="#666" stroke-width="1"/></svg>
<div class="abs" style="left:1242px;top:112px;width:13px;height:1px;background:#bdbdbd"></div>
<div class="abs" style="left:1242px;top:115px;width:13px;height:1px;background:#bdbdbd"></div>
<svg class="ico" style="left:1242px;top:132px" width="14" height="14" viewBox="0 0 14 14"><path d="M3 10L10 2.500L12.500 5L6 12H3Z" fill="none" stroke="#444" stroke-width="1"/><path d="M1 12.500H13" stroke="#444" stroke-width="1"/></svg>
<svg class="ico" style="left:1244px;top:162px" width="11" height="15" viewBox="0 0 11 15"><path d="M1.500 1.500V11.500L4.300 9L6.300 13.500L8 12.700L6 8.500H9.500Z" fill="none" stroke="#444" stroke-width="1"/></svg>
<svg class="ico" style="left:1243px;top:192px" width="13" height="13" viewBox="0 0 13 13"><path d="M0 2.500H9M0 6.500H3M7 6.500H13M0 10.500H5M9 10.500H13" stroke="#444" stroke-width="1"/><circle cx="10.500" cy="2.500" r="1.500" fill="none" stroke="#444" stroke-width="1"/><circle cx="5" cy="6.500" r="1.500" fill="none" stroke="#444" stroke-width="1"/><circle cx="7" cy="10.500" r="1.500" fill="none" stroke="#444" stroke-width="1"/></svg>
<div class="abs" style="left:1233px;top:621px;width:34px;height:1px;background:#d6d6d6"></div>
<svg class="ico" style="left:1243px;top:636px" width="13" height="13" viewBox="0 0 13 13"><g fill="none" stroke="#444" stroke-width="1.100"><rect x=".8" y=".8" width="4.400" height="4.400" rx="1.200"/><rect x="7.800" y=".8" width="4.400" height="4.400" rx="1.200"/><rect x=".8" y="7.800" width="4.400" height="4.400" rx="1.200"/><rect x="7.800" y="7.800" width="4.400" height="4.400" rx="1.200"/></g></svg>
<!-- speaking bar -->
<div class="abs" style="left:1109px;top:81px;width:158px;height:30px;background:#393c42"></div>
<div class="t" style="left:1118.500px;top:92px;font-size:10.100px;color:#fff">正在讲话:</div>
<svg class="ico" style="left:1196px;top:84px" width="40" height="24" viewBox="1196 84 40 24"><defs><linearGradient id="gM" x1="0" y1="0" x2="1" y2="1"><stop offset="0" stop-color="#5b5e63"/><stop offset="1" stop-color="#45484d"/></linearGradient></defs><path d="M1209.500 86.800Q1210.300 86 1211 86.800L1216.500 92.500L1204.500 104.800Q1203.700 105.600 1203 104.800L1198.500 100Q1197.700 99.200 1198.500 98.400Z" fill="url(#gM)"/><path d="M1221.800 87Q1222.600 86.200 1223.400 87L1233.800 98.300Q1234.500 99.100 1233.800 99.900L1229.500 104.600Q1228.700 105.400 1228 104.600L1223 99.500L1217.800 104.800Q1217 105.600 1216.200 104.800L1211 99.500Q1210.300 98.700 1211 98Z" fill="url(#gM)"/></svg>
<!-- IME -->
<div class="abs" style="left:1132px;top:42px;width:132px;height:40px;border-radius:9px;background:#f6c20a"></div>
<div class="abs" style="left:1132px;top:42px;width:132px;height:37px;border-radius:9px;background:#ffe716"></div>
<div class="t" style="left:1140px;top:50px;font-size:19px;color:#5e3006;font-family:'Noto Sans CJK SC',sans-serif;font-weight:400">中</div>
<div class="abs" style="left:1164px;top:56.500px;width:6.500px;height:6.500px;border-radius:50%;border:1.300px solid #a5a68e"></div>
<div class="t" style="left:1172px;top:50px;font-size:17px;color:#a5a68e;font-family:'Liberation Sans',sans-serif">,</div>
<div class="t" style="left:1182px;top:50px;font-size:19px;color:#a2a391;font-family:'Noto Sans CJK SC',sans-serif">简</div>
<div class="abs" style="left:1207px;top:57.500px;width:51px;height:4px;background:#5b3a16;border-radius:1px"></div>
<div class="abs" style="left:1214px;top:62px;width:38px;height:10px;border-radius:50%;background:#f3bd0a"></div>
<div class="abs" style="left:1212px;top:49px;width:21px;height:21px;border-radius:50%;background:#fff;border:3px solid #aaa9b1"></div>
<div class="abs" style="left:1231.500px;top:49px;width:21px;height:21px;border-radius:50%;background:#fff;border:3px solid #aaa9b1"></div>
<div class="abs" style="left:1220.500px;top:55.500px;width:6px;height:6px;border-radius:50%;background:#7a3f12"></div>
<div class="abs" style="left:1239px;top:55.500px;width:6px;height:6px;border-radius:50%;background:#7a3f12"></div>
<div class="abs" style="left:1223.500px;top:56.500px;width:2px;height:2px;border-radius:50%;background:#f2e6da"></div>
<div class="abs" style="left:1242px;top:56.500px;width:2px;height:2px;border-radius:50%;background:#f2e6da"></div>
<!-- status bar -->
<div class="sb" style="left:6px">页码: 3</div>
<div class="sb" style="left:46px">页面: 3/3</div>
<div class="sb" style="left:97px">节: 1/1</div>
<div class="sb" style="left:137px">设置值: 2.5厘米</div>
<div class="sb" style="left:217px">行: 1</div>
<div class="sb" style="left:246px">列: 2</div>
<div class="sb" style="left:283px">字数: 0</div>
<div class="sep" style="left:40px;top:658px;height:22px;background:#e2e2e2"></div>
<div class="sep" style="left:91px;top:658px;height:22px;background:#e2e2e2"></div>
<div class="sep" style="left:319px;top:658px;height:22px;background:#e2e2e2"></div>
<div class="sep" style="left:455px;top:658px;height:22px;background:#e2e2e2"></div>
<svg class="ico" style="left:325px;top:663px" width="12" height="11" viewBox="0 0 12 11"><path d="M.6 .6H11.400V8H7L6 9.800L5 8H.6Z" fill="none" stroke="#444" stroke-width="1"/><path d="M3.500 4L5.300 6L8.500 2.500" fill="none" stroke="#444" stroke-width="1"/></svg>
<div class="sb" style="left:340px">拼写检查</div>
<svg class="ico" style="left:392px;top:663px" width="13" height="11" viewBox="0 0 13 11"><path d="M3 .6H.6V10.400H3M10 .6H12.400V10.400H10" fill="none" stroke="#444" stroke-width="1"/><path d="M4.300 3L8.700 8M8.700 3L4.300 8" stroke="#444" stroke-width="1"/></svg>
<div class="sb" style="left:409px">文档校对</div>
<svg class="ico" style="left:890px;top:663px" width="12" height="12" viewBox="0 0 12 12"><path d="M1 4.500V1H4.500M7.500 1H11V4.500M11 7.500V11H7.500M4.500 11H1V7.500M1 1L4.500 4.500M11 1L7.500 4.500M11 11L7.500 7.500M1 11L4.500 7.500" fill="none" stroke="#444" stroke-width="1"/></svg>
<svg class="ico" style="left:910px;top:663px" width="13" height="12" viewBox="0 0 13 12"><path d="M.6 1H5Q6.500 1 6.500 2.500V11Q6.500 10 5 10H.6ZM12.400 1H8Q6.500 1 6.500 2.500V11Q6.500 10 8 10H12.400Z" fill="none" stroke="#444" stroke-width="1"/></svg>
<svg class="ico" style="left:931px;top:662px" width="14" height="14" viewBox="0 0 14 14"><path d="M3 9.500L9.500 2L12 4.500L5.500 11.500H3Z" fill="none" stroke="#444" stroke-width="1"/><path d="M1 13H13" stroke="#444" stroke-width="1.200"/></svg>
<div class="abs" style="left:950px;top:659px;width:19px;height:19px;background:#cfcfcf;border-radius:2px"></div>
<svg class="ico" style="left:954px;top:662px" width="11" height="13" viewBox="0 0 11 13"><path d="M.6 .6H7.500L10.400 3.500V12.400H.6Z" fill="none" stroke="#333" stroke-width="1"/><path d="M2.500 5H8.500M2.500 7.500H8.500M2.500 10H8.500" stroke="#333" stroke-width="1"/></svg>
<svg class="ico" style="left:975px;top:662px" width="12" height="13" viewBox="0 0 12 13"><rect x=".6" y=".6" width="10.800" height="11.800" rx="1" fill="none" stroke="#444" stroke-width="1"/><path d="M2.500 4H3.500M5 4H9.500M2.500 6.500H3.500M5 6.500H9.500M2.500 9H3.500M5 9H9.500" stroke="#444" stroke-width="1"/></svg>
<svg class="ico" style="left:995px;top:662px" width="13" height="13" viewBox="0 0 13 13"><circle cx="6.500" cy="6.500" r="5.800" fill="none" stroke="#444" stroke-width="1"/><ellipse cx="6.500" cy="6.500" rx="2.600" ry="5.800" fill="none" stroke="#444" stroke-width="1"/><path d="M.8 6.500H12.200M1.500 3.500H11.500M1.500 9.500H11.500" stroke="#444" stroke-width=".9"/></svg>
<svg class="ico" style="left:1015px;top:661px" width="15" height="14" viewBox="0 0 15 14"><path d="M1 9Q7.500 2 14 9Q7.500 15 1 9Z" fill="none" stroke="#444" stroke-width="1"/><circle cx="7.500" cy="9" r="2.200" fill="none" stroke="#444" stroke-width="1"/><path d="M3 4L4 5.500M7.500 2.500V4.300M12 4L11 5.500" stroke="#444" stroke-width="1"/></svg>
<div class="sb" style="left:1045px;color:#666">90%</div>
<div class="t" style="left:1068px;top:668px;font-size:5px;color:#666">▼</div>
<div class="abs" style="left:1082px;top:668px;width:9px;height:2px;background:#444"></div>
<div class="abs" style="left:1100px;top:669px;width:50px;height:1px;background:#8a8a8a"></div><div class="abs" style="left:1150px;top:669px;width:64px;height:1px;background:#cfcfcf"></div>
<div class="sep" style="left:1037px;top:660px;height:17px;background:#e4e4e4"></div>
<div class="abs" style="left:1145px;top:664px;width:10px;height:10px;border-radius:50%;background:#f8f8f8;border:1px solid #555"></div>
<svg class="ico" style="left:1223px;top:664px" width="10" height="10" viewBox="0 0 10 10"><path d="M5 0V10M0 5H10" stroke="#333" stroke-width="1.500"/></svg>
<svg class="ico" style="left:1244px;top:664px" width="11" height="11" viewBox="0 0 11 11"><path d="M.6 3V2Q.6 .6 2 .6H3M8 .6H9Q10.400 .6 10.400 2V3M10.400 8V9Q10.400 10.400 9 10.400H8M3 10.400H2Q.6 10.400 .6 9V8" fill="none" stroke="#444" stroke-width="1"/><circle cx="5.500" cy="5.500" r="1" fill="#444"/></svg>
<!-- taskbar -->
<svg class="ico" style="left:13px;top:690px" width="14" height="14" viewBox="0 0 14 14"><path d="M0 2L6 1.200V6.600H0ZM6.800 1.100L14 0V6.600H6.800ZM0 7.400H6V12.800L0 12ZM6.800 7.400H14V14L6.800 12.900Z" fill="#fff"/></svg>
<div class="abs" style="left:40px;top:681px;width:282px;height:32px;background:#f2f2f2"></div>
<svg class="ico" style="left:50px;top:689px" width="14" height="15" viewBox="0 0 14 15"><circle cx="8.300" cy="5.700" r="4.500" fill="none" stroke="#222" stroke-width="1.300"/><path d="M5 9.200L.8 14" stroke="#222" stroke-width="1.400"/></svg>
<div class="t" style="left:73px;top:690px;font-size:12.400px;color:#2a2a2a">在这里输入你要搜索的内容</div>
<!-- edge -->
<svg class="ico" style="left:337px;top:687px" width="17" height="18" viewBox="0 0 17 18"><path d="M.5 8.500C1 3.500 4.500 .5 9 .5C14 .5 16.800 4 16.500 10.500H5.500C5.800 13.500 8 14.800 10.500 14.800C12.500 14.800 14.300 14.200 15.800 13.200V16.500C14 17.500 12 18 9.800 18C5 18 1.800 15 1.800 10.800C1.800 8.500 3 6.500 4.800 5.300C3 5.800 1.300 7 .5 8.500ZM5.600 7.500H11.800C11.800 5.300 10.600 4 8.800 4C7.100 4 5.900 5.400 5.600 7.500Z" fill="#1b86e2"/></svg>
<!-- firefox -->
<svg class="ico" style="left:377px;top:686px" width="20" height="20" viewBox="0 0 20 20"><circle cx="10" cy="11" r="8.800" fill="#ff7a1a"/><path d="M10 2.200C13 .5 14 2 14.500 3.500C16 3 17 4 17.500 5.500C18.800 8 19 10 18.500 12.500C18 9 16 8 14 7.500C12 5 11 4 10 2.200Z" fill="#ffc928"/><path d="M2 6C1.500 3.500 2.500 2 3.500 1.500C3.500 3 4.500 4 6 4.500Z" fill="#ff7a1a"/><circle cx="10.200" cy="11.200" r="4.500" fill="#7a3df0"/><path d="M5.500 8C7.500 7.500 9 8 10 9.500C8.500 9.500 7.500 10.500 7.800 12C8.200 14 10.500 14.800 12.500 13.500C11.500 16 8.500 17 6 15.500C3.500 14 3.500 10 5.500 8Z" fill="#ff4f5e"/><path d="M1.300 12C1.500 17 6 20 10.500 19.800C15 19.600 18.500 16.500 18.700 12C17.500 16 14 17.500 10.500 17.500C6.500 17.500 3 15.500 1.300 12Z" fill="#e8342b"/></svg>
<!-- folder -->
<svg class="ico" style="left:418px;top:687px" width="19" height="17" viewBox="0 0 19 17"><path d="M.5 2Q.5 1 1.500 1H7L8.500 2.800H17.500Q18.500 2.800 18.500 3.800V6H.5Z" fill="#e8a723"/><rect x=".5" y="4.500" width="18" height="12" rx=".8" fill="#fcd45c"/><rect x="4" y="9" width="11" height="7.500" fill="#3f8fdc"/><rect x="6.800" y="12" width="5.400" height="4.500" fill="#fcd45c"/></svg>
<div class="abs" style="left:411px;top:711px;width:34px;height:2px;background:#77b8ec"></div>
<!-- wps -->
<svg class="ico" style="left:459px;top:688px" width="18" height="17" viewBox="0 0 18 17"><rect width="18" height="17" rx="2.500" fill="#2f85f0"/><path d="M3.300 5.500L5.300 11.500L7.500 7L9.500 11.500L11.500 5.500M12.500 5.500H15" fill="none" stroke="#fff" stroke-width="1.300" stroke-linejoin="round"/></svg>
<div class="abs" style="left:452px;top:711px;width:26px;height:2px;background:#77b8ec"></div>
<div class="abs" style="left:478px;top:711px;width:7px;height:2px;background:#5a8fbd"></div>
<!-- tencent meeting -->
<div class="abs" style="left:490px;top:680px;width:41px;height:33px;background:#565758"></div>
<svg class="ico" style="left:500px;top:686px" width="20" height="20" viewBox="0 0 20 20"><rect width="20" height="20" rx="1" fill="#1470f0"/><rect x="10" width="10" height="20" fill="#0a5fe0"/><path d="M2.500 12.500L7.500 6.500L10.500 10L13 7L17.500 12.500L15.500 14L13 11.500L11 13.800L7.800 10.500L5 14Z" fill="#fff"/></svg>
<div class="abs" style="left:490px;top:711px;width:41px;height:2px;background:#77b8ec"></div>
<!-- wechat -->
<div class="abs" style="left:531px;top:680px;width:40px;height:33px;background:#b3652c"></div>
<svg class="ico" style="left:540px;top:687px" width="22" height="19" viewBox="0 0 22 19"><ellipse cx="8" cy="6.500" rx="7.500" ry="6.300" fill="#6cc644"/><path d="M3 11L2 14.500L6 12.500Z" fill="#6cc644"/><circle cx="5.500" cy="5" r="1" fill="#3a8a22"/><circle cx="10.500" cy="5" r="1" fill="#3a8a22"/><ellipse cx="15" cy="12" rx="6.500" ry="5.300" fill="#f2f2f2"/><path d="M18.500 16L20 18.500L16 17Z" fill="#f2f2f2"/><circle cx="13" cy="11" r=".8" fill="#999"/><circle cx="17" cy="11" r=".8" fill="#999"/></svg>
<div class="abs" style="left:531px;top:711px;width:40px;height:2px;background:#ff6a13"></div>
<!-- tray -->
<svg class="ico" style="left:1000px;top:693px" width="11" height="7" viewBox="0 0 11 7"><path d="M.7 6.300L5.500 1.200L10.300 6.300" fill="none" stroke="#fff" stroke-width="1.200"/></svg>
<svg class="ico" style="left:1020px;top:689px" width="10" height="15" viewBox="0 0 10 15"><rect x="2.500" y=".5" width="5" height="9" rx="1.200" fill="#fff"/><path d="M.8 6.500V8Q.8 11 5 11Q9.200 11 9.200 8V6.500M5 11V13.500M2.500 14H7.500" fill="none" stroke="#fff" stroke-width="1"/></svg>
<svg class="ico" style="left:1057px;top:692px" width="15" height="9" viewBox="0 0 15 9"><rect x="1.800" y=".8" width="12.400" height="7.400" fill="none" stroke="#fff" stroke-width="1"/><rect x="3.500" y="2.400" width="9" height="4.200" fill="#fff"/><path d="M.5 0V3.500M.5 2H2" stroke="#fff" stroke-width="1"/></svg>
<svg class="ico" style="left:1079px;top:691px" width="12" height="12" viewBox="0 0 12 12"><g fill="none" stroke="#d8d8d8" stroke-width="1"><path d="M1 11Q1 1.500 11 1"/><path d="M4 11Q4 4.500 11 4"/><path d="M7 11Q7 7.500 11 7"/></g><circle cx="10" cy="10.500" r="1.200" fill="#fff"/></svg>
<svg class="ico" style="left:1097px;top:691px" width="14" height="12" viewBox="0 0 14 12"><path d="M.6 4H3L6.500 1V11L3 8H.6Z" fill="none" stroke="#fff" stroke-width="1"/><path d="M8.500 4Q9.800 6 8.500 8" fill="none" stroke="#fff" stroke-width="1"/><path d="M10.300 2.500Q12.500 6 10.300 9.500" fill="none" stroke="#bbb" stroke-width="1"/><path d="M12 1Q15 6 12 11" fill="none" stroke="#888" stroke-width="1"/></svg>
<div class="t" style="left:1117.500px;top:691px;font-size:11.500px;color:#fff">中</div>
<svg class="ico" style="left:1140px;top:689px" width="14" height="14" viewBox="0 0 14 14"><path d="M2 1.500L13 .5Q14 .5 13.800 1.500L12.500 12Q12.300 13 11.300 13.100L1.500 13.800Q.3 13.800 .5 12.800L1 2.500Q1 1.600 2 1.500Z" fill="#f2521f"/><path d="M10.500 3.800Q6 2.500 4.500 4.500Q3.500 6.500 7 7Q10 7.500 9.300 9.300Q8 11 3.500 9.800" fill="none" stroke="#fff" stroke-width="1.700"/></svg>
<div class="t" style="left:1179.500px;top:684px;font-size:10.600px;color:#fff">16:06</div>
<div class="t" style="left:1168px;top:698.500px;font-size:11px;color:#fff">2020/6/12</div>
<svg class="ico" style="left:1233px;top:690px" width="15" height="14" viewBox="0 0 15 14"><path d="M.7 .7H14.300V10H9.500L7.500 12.500L7.500 10H.7Z" fill="none" stroke="#fff" stroke-width="1.100"/></svg>
<div class="abs" style="left:1263px;top:681px;width:1px;height:32px;background:#6b6b6b"></div>

<!-- meeting window -->
<div id="win" class="abs"></div>
<div id="stage" class="abs"></div>
<div id="slide" class="abs">
<svg class="abs" style="left:0;top:0" width="641" height="359" viewBox="0 0 641 359">
<defs>
<filter id="paper" x="0" y="0" width="100%" height="100%"><feTurbulence type="fractalNoise" baseFrequency="0.07" numOctaves="5" seed="4"/><feColorMatrix type="matrix" values="0 0 0 0 0.86  0 0 0 0 0.76  0 0 0 0 0.56  1.6 0 0 0 -0.55"/></filter>
</defs>
<rect width="641" height="359" fill="#faf3e3"/>
<rect width="641" height="359" filter="url(#paper)" opacity="0.75"/>
<rect x="40.500" y="64.500" width="376" height="106" rx="19" ry="19" fill="none" stroke="#5b76a8" stroke-width="1"/>
<!-- block arrows -->
<g fill="#fff" stroke="#3c3c3c" stroke-width="1" stroke-linejoin="miter">
<path d="M127.500 202.500H157V197.200L168 207.500L157 217.900V212.800H127.500z"/>
<path d="M275.300 201.500H304.600V196.400L315.600 207L304.600 217.500V212.600H275.300z"/>
<path d="M416.600 199.400H446.300V194.100L456.900 204.400L446.300 214.800V209.500H416.600z"/>
<path d="M463.700 293.100H434.400V288L424.100 298.200L434.400 308.400V303.400H463.700z"/>
</g>
<!-- curved arrow -->
<path d="M562 204.300A47.300 49.700 0 0 1 609.300 254V262A47.300 45.800 0 0 0 562 216.200Z" fill="#c8c8c8" stroke="#3c3c3c" stroke-width="1" stroke-linejoin="round"/>
<path d="M609.300 254A47.300 49.300 0 0 1 574.400 301.600V308.300L562 297.700L574.400 284.600V290.200A47.300 45.900 0 0 0 609.300 246Z" fill="#fff" stroke="#3c3c3c" stroke-width="1" stroke-linejoin="round"/>
</svg>
<div class="corner" style="left:0;top:0;width:40px;height:2px"></div>
<div class="corner" style="left:0;top:0;width:2px;height:40px"></div>
<div class="corner" style="right:0;top:0;width:40px;height:2px"></div>
<div class="corner" style="right:0;top:0;width:2px;height:40px"></div>
<div class="corner" style="left:0;bottom:0;width:40px;height:2px"></div>
<div class="corner" style="left:0;bottom:0;width:2px;height:39px"></div>
<div class="corner" style="right:0;bottom:0;width:40px;height:2px"></div>
<div class="corner" style="right:0;bottom:0;width:2px;height:39px"></div>
<div class="t" style="left:37px;top:29.500px;font-size:24px;font-weight:300;font-family:'Noto Sans CJK SC',sans-serif">我的西游记</div>
<div class="t" style="left:171px;top:36.500px;font-size:12px">2017.09-2018.01西班牙瓦伦西亚大学</div>
<div class="bul" style="top:83px"></div><div class="t" style="left:74px;top:82px;font-size:12px">成绩</div>
<div class="bul" style="top:104px"></div><div class="t" style="left:74px;top:103px;font-size:12px">英语：四级610，六级564</div>
<div class="bul" style="top:126px"></div><div class="t" style="left:74px;top:125px;font-size:12px">班群通知；山东大学对外合作</div>
<div class="bul" style="top:148px"></div><div class="t" style="left:74px;top:147px;font-size:12px">欧盟伊拉斯漠项目：800欧，包国际长途，保险</div>
<div class="wa" style="left:46.500px;top:185.500px;color:#fbdcc4;-webkit-text-stroke:1.300px #ed7d31;font-weight:700">兴奋</div>
<div class="wa" style="left:187px;top:185px;color:#7fa5e0;font-weight:700;-webkit-text-stroke:.600px #5580cc;text-shadow:-.600px -.600px 0 #b4cbef,1px 1px 0 #3f69b5,1.800px 1.800px 1.500px rgba(80,110,180,.55)">紧张</div>
<div class="wa" style="left:334px;top:185.500px;color:#000;font-weight:400;text-shadow:1px 1px 2px rgba(0,0,0,.3)">焦虑</div>
<div class="wa" style="left:476px;top:184px;color:#ffe699;-webkit-text-stroke:1px #ffc000;font-weight:500">习惯</div>
<div class="wa" style="left:335px;top:277px;color:#a18fc0;font-weight:400;text-shadow:1px 1px 1px rgba(0,0,0,.2)">学习</div>
<div class="wa" style="left:475px;top:280px;color:#548235;font-weight:400">朋友</div>
</div>
<div id="strip" class="abs">
<div class="tile" style="top:45px;background:linear-gradient(180deg,#0f1012,#17181a 40%,#252629)"><div class="av"><svg width="42" height="42"><use href="#avGirl"/></svg></div><div class="lab" style="width:112px;padding-left:50px;opacity:1"><span class="u" style="background:#0a6cff"><svg width="17" height="17" style="left:0;top:0"><use href="#icUser"/></svg></span><svg width="13" height="13" style="left:18px;top:2px"><use href="#icShareW"/></svg><svg width="13" height="13" style="left:34px;top:2px"><use href="#icMicG"/></svg>张薇的屏幕共...</div></div>
<div class="tile" style="top:126px"><div class="av"><div class="bluec" style="width:42px;height:42px;font-size:14.500px;font-weight:500;line-height:41px">旭升</div></div><div class="lab" style="width:66px;padding-left:37px;opacity:1"><span class="u" style="background:#f5821f"><svg width="17" height="17" style="left:0;top:0"><use href="#icUser"/></svg></span><svg width="13" height="13" style="left:21px;top:2px"><use href="#icMicW"/></svg>王旭升</div></div>
<div class="tile" style="top:207.4px"><div class="av"><svg width="42" height="42"><use href="#avSun"/></svg></div><div class="lab" style="width:66px;padding-left:37px;opacity:1"><span class="u" style="background:#0a6cff"><svg width="17" height="17" style="left:0;top:0"><use href="#icUser"/></svg></span><svg width="13" height="13" style="left:21px;top:2px"><use href="#icMicW"/></svg>贾国庆</div></div>
<div class="tile" style="top:288.5px"><div class="av"><div class="bluec" style="width:42px;height:42px;font-size:14.500px;font-weight:500;line-height:41px">主任</div></div><div class="lab" style="width:99px;padding-left:37px;opacity:1"><span class="u" style="background:#0a6cff"><svg width="17" height="17" style="left:0;top:0"><use href="#icUser"/></svg></span><svg width="13" height="13" style="left:21px;top:2px"><use href="#icMicW"/></svg>省立医院侯宁...</div></div>
<div class="tile" style="top:369.6px;background:linear-gradient(180deg,#202123,#18191b)"><div class="av" style="opacity:.6"><svg width="42" height="42"><use href="#avTul"/></svg></div><div class="lab" style="width:99px;padding-left:37px;opacity:0.55"><span class="u" style="background:#0a6cff"><svg width="17" height="17" style="left:0;top:0"><use href="#icUser"/></svg></span><svg width="13" height="13" style="left:21px;top:2px"><use href="#icMicW"/></svg>临床药学郝国...</div></div>
</div>
<div id="members" class="abs">
<div class="hd"></div>
<svg class="abs" style="left:10px;top:8px" width="10" height="8" viewBox="0 0 10 8"><path d="M1.500 2L5 5.500L8.500 2" fill="none" stroke="#8a8a8a" stroke-width="1"/></svg>
<div class="t" style="left:115px;top:8px;font-size:10px;color:#222">成员(102人)</div>
<div class="search"><svg class="abs" style="left:5px;top:7px" width="11" height="11" viewBox="0 0 11 11"><circle cx="4.500" cy="4.500" r="3.300" fill="none" stroke="#b5b5b5" stroke-width="1"/><path d="M7 7L10 10" stroke="#b5b5b5" stroke-width="1"/></svg><div class="t" style="left:18px;top:7px;font-size:10px;color:#a9a9a9">搜索成员</div></div>
<div class="abs" style="left:0;top:62px;width:283px;height:379px;overflow:hidden">
<div class="row" style="top:3.30px"><div class="av"><div class="bluec" style="width:25px;height:25px;font-size:9px;line-height:25px;letter-spacing:-.500px">旭升</div></div><div class="nm">王旭升<i>(主持人, 我)</i></div><svg class="ic" style="left:234px" width="16" height="18"><use href="#icMicOff"/></svg><svg class="ic" style="left:254px" width="20" height="18"><use href="#icCamOff"/></svg></div>
<div class="row" style="top:39.65px"><div class="av"><svg width="25" height="25" style="background:#e9e9e9"><use href="#avGirl"/></svg></div><div class="nm">张薇<i>(联席主持人)</i></div><svg class="ic" style="left:211px" width="18" height="18"><use href="#icShare"/></svg><svg class="ic" style="left:234px" width="16" height="18"><use href="#icMicOn"/></svg><svg class="ic" style="left:254px" width="20" height="18"><use href="#icCamOff"/></svg></div>
<div class="row" style="top:76.00px"><div class="av"><svg width="25" height="25"><use href="#avSun"/></svg></div><div class="nm">贾国庆<i>(联席主持人)</i></div><svg class="ic" style="left:234px" width="16" height="18"><use href="#icMicOff"/></svg><svg class="ic" style="left:254px" width="20" height="18"><use href="#icCamOff"/></svg></div>
<div class="row" style="top:112.35px"><div class="av"><svg width="25" height="25"><use href="#avTul"/></svg></div><div class="nm">临床药学郝国祥老师<i>(联席主持人)</i></div><svg class="ic" style="left:234px" width="16" height="18"><use href="#icMicOff"/></svg><svg class="ic" style="left:254px" width="20" height="18"><use href="#icCamOff"/></svg></div>
<div class="row" style="top:148.70px"><div class="av"><div class="bluec" style="width:25px;height:25px;font-size:9px;line-height:25px;letter-spacing:-.500px">主任</div></div><div class="nm">省立医院侯宁主任<i>(联席主持人)</i></div><svg class="ic" style="left:234px" width="16" height="18"><use href="#icMicOff"/></svg><svg class="ic" style="left:254px" width="20" height="18"><use href="#icCamOff"/></svg></div>
<div class="row" style="top:185.05px"><div class="av"><svg width="25" height="25"><use href="#avWxw"/></svg></div><div class="nm">王晓文<i>(联席主持人)</i></div><svg class="ic" style="left:234px" width="16" height="18"><use href="#icMicOff"/></svg><svg class="ic" style="left:254px" width="20" height="18"><use href="#icCamOff"/></svg></div>
<div class="row" style="top:221.40px"><div class="av"><svg width="25" height="25"><use href="#avSd"/></svg></div><div class="nm">&nbsp;山大+单冬梅</div><svg class="ic" style="left:234px" width="16" height="18"><use href="#icMicOff"/></svg><svg class="ic" style="left:254px" width="20" height="18"><use href="#icCamOff"/></svg></div>
<div class="row" style="top:257.75px"><div class="av"><svg width="25" height="25"><use href="#avDuck"/></svg></div><div class="nm">16临药夏振兴</div><svg class="ic" style="left:234px" width="16" height="18"><use href="#icMicOff"/></svg><svg class="ic" style="left:254px" width="20" height="18"><use href="#icCamOff"/></svg></div>
<div class="row" style="top:294.10px"><div class="av"><svg width="25" height="25"><use href="#avMan"/></svg></div><div class="nm">17临药杨坤</div><svg class="ic" style="left:234px" width="16" height="18"><use href="#icMicOff"/></svg><svg class="ic" style="left:254px" width="20" height="18"><use href="#icCamOff"/></svg></div>
<div class="row" style="top:330.45px"><div class="av"><svg width="25" height="25"><use href="#avAni"/></svg></div><div class="nm">18 临药 赖勇杰</div><svg class="ic" style="left:234px" width="16" height="18"><use href="#icMicOff"/></svg><svg class="ic" style="left:254px" width="20" height="18"><use href="#icCamOff"/></svg></div>
<div class="row" style="top:366.80px"><div class="av"><svg width="25" height="25"><use href="#avLast"/></svg></div><div class="nm"></div><svg class="ic" style="left:234px" width="16" height="18"><use href="#icMicOff"/></svg><svg class="ic" style="left:254px" width="20" height="18"><use href="#icCamOff"/></svg></div>
</div>
<div class="abs" style="left:0;top:441px;width:283px;height:1px;background:#e8e8e8"></div>
<div class="btn" style="left:33px;width:60px">全体静音</div>
<div class="btn" style="left:106px;width:73px">解除全体静音</div>
<div class="btn" style="left:191px;width:60px">更多 <span style="font-size:7px;position:relative;top:-1px">▼</span></div>
</div>

<!-- meeting window title -->
<div class="t" style="left:550.500px;top:76.500px;font-size:11px;color:#1a1a1a">腾讯会议</div>
<div class="abs" style="left:1041px;top:81px;width:9px;height:1.300px;background:#555"></div>
<div class="abs" style="left:1066px;top:77.500px;width:8px;height:8px;border:1.200px solid #666"></div>
<svg class="ico" style="left:1090px;top:77.500px" width="8" height="8" viewBox="0 0 8 8"><path d="M.5 .5L7.500 7.500M7.500 .5L.5 7.500" stroke="#555" stroke-width="1.100"/></svg>
<!-- collapse handle -->
<div class="abs" style="left:666px;top:327px;width:13px;height:33px;background:#6b655c;border-radius:3px 0 0 3px"></div>
<svg class="ico" style="left:670px;top:339px" width="6" height="10" viewBox="0 0 6 10"><path d="M.7 .7L5 5L.7 9.300" fill="none" stroke="#c4c0b8" stroke-width="1"/></svg>
<!-- bottom-left label -->
<div class="abs" style="left:38px;top:569px;width:20px;height:20px;background:#0a6cff"></div>
<svg class="ico" style="left:39.500px;top:570px" width="17" height="17"><use href="#icUser"/></svg>
<svg class="ico" style="left:59px;top:572px" width="13" height="13"><use href="#icShareW"/></svg>
<svg class="ico" style="left:72px;top:572px" width="13" height="13"><use href="#icMicG"/></svg>
<div class="t" style="left:86px;top:572.500px;font-size:13.200px;color:#fff">张薇的屏幕共享</div>
<!-- tiny taskbar reflection under window -->
<div class="abs" style="left:404px;top:590px;width:410px;height:11px;background:#3f3f41;border-top:2px solid #0a0a0a"></div>
<div class="abs" style="left:407px;top:594.500px;width:3px;height:3px;background:#eee"></div>
<div class="abs" style="left:416px;top:594.500px;width:4px;height:3px;background:#e8c24a"></div>
<div class="abs" style="left:425px;top:594.500px;width:3px;height:3px;background:#f0f0f0"></div>
<div class="abs" style="left:434px;top:594.500px;width:3px;height:3px;background:#35a852"></div>
<div class="abs" style="left:444px;top:594.500px;width:3px;height:3px;background:#5aa0e8"></div>
<div class="abs" style="left:454px;top:594.500px;width:3px;height:3px;background:#2d4f9a"></div>
<div class="abs" style="left:464px;top:594.500px;width:3px;height:3px;background:#e85a2a"></div>
<div class="abs" style="left:475px;top:594.500px;width:4px;height:3px;background:#2f85f0"></div>
<div class="abs" style="left:486px;top:594.500px;width:3px;height:3px;background:#1470f0"></div>
<div class="abs" style="left:496px;top:594.500px;width:3px;height:3px;background:#6cc644"></div>
<div class="abs" style="left:752px;top:595px;width:38px;height:2px;background:#b9b9b9;opacity:.7"></div>
<div class="abs" style="left:783px;top:594px;width:3px;height:3px;background:#f2521f"></div>
<div class="t" style="left:791px;top:592.500px;font-size:3.500px;color:#ddd">16:06</div>
<div class="t" style="left:789px;top:596.500px;font-size:3.500px;color:#ddd">2020/6/12</div>
<div class="abs" style="left:806px;top:594px;width:4px;height:4px;background:#ddd"></div>

</body>
</html>
